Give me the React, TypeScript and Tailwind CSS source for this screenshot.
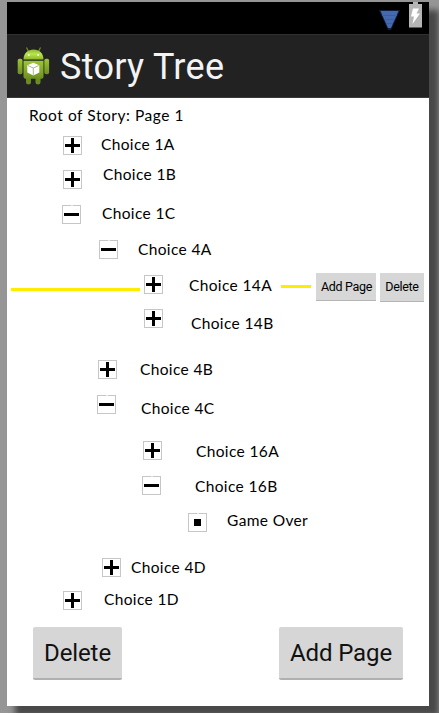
type Kind = "plus" | "minus" | "dot";

const face = "font-['Lato','Liberation_Sans',sans-serif] text-[15.5px] leading-5 whitespace-nowrap text-black";
const plain = `${face} tracking-[0.36px]`;

function Toggle({ kind, className = "" }: { kind: Kind; className?: string }) {
  return (
    <svg className={`h-[19px] w-[19px] shrink-0 ${className}`} viewBox="0 0 19 19" shapeRendering="crispEdges">
      <rect x="0.5" y="0.5" width="18" height="18" fill="#fff" stroke="#c6c6c6" />
      {kind === "dot" ? (
        <path d="M6 6h7v7H6z" />
      ) : (
        <path d="M2 8h15v3H2z" />
      )}
      {kind === "plus" && <path d="M8 2h3v15H8z" />}
      {kind !== "plus" && <path d="M9 0h2v1H9z" fill="#e8e8e8" />}
    </svg>
  );
}

const before: { kind: Kind; label: string; row: string; text: string }[] = [
  { kind: "plus", label: "Choice 1A", row: "h-[34px] pl-14", text: "ml-[19px] -mt-[2px]" },
  { kind: "plus", label: "Choice 1B", row: "h-[35px] pl-14", text: "ml-[21px] -mt-[6px]" },
  { kind: "minus", label: "Choice 1C", row: "h-[35px] pl-[55px]", text: "ml-[21px] -mt-[2px]" },
  { kind: "minus", label: "Choice 4A", row: "h-[35px] pl-[92px]", text: "ml-5 -mt-px" },
];

const after: typeof before = [
  { kind: "plus", label: "Choice 14B", row: "h-[51px] pl-[137px]", text: "ml-7 mt-1" },
  { kind: "plus", label: "Choice 4B", row: "h-[35px] pl-[91px]", text: "ml-[23px] -mt-px" },
  { kind: "minus", label: "Choice 4C", row: "h-[46px] pl-[90px]", text: "ml-[25px] mt-[3px]" },
  { kind: "plus", label: "Choice 16A", row: "h-[35px] pl-[136px]", text: "ml-[34px]" },
  { kind: "minus", label: "Choice 16B", row: "h-[37px] pl-[135px]", text: "ml-[34px]" },
  { kind: "dot", label: "Game Over", row: "h-[45px] pl-[181px]", text: "ml-5 -mt-[3px]" },
  { kind: "plus", label: "Choice 4D", row: "h-[33px] pl-[95px]", text: "ml-[10px] -mt-px" },
  { kind: "plus", label: "Choice 1D", row: "h-[37px] pl-14", text: "ml-[22px] -mt-[2px]" },
];

function Row({ kind, label, row, text }: (typeof before)[number]) {
  return (
    <div className={`flex items-start ${row}`}>
      <Toggle kind={kind} />
      <span className={`${plain} ${text}`}>{label}</span>
    </div>
  );
}

function Robot() {
  return (
    <svg className="mt-[11px] h-[40px] w-[34px] shrink-0" viewBox="0 0 34 40">
      <defs>
        <linearGradient id="head" x1="0" y1="0" x2="0" y2="1">
          <stop offset="0" stopColor="#8fb636" />
          <stop offset=".45" stopColor="#b9e64a" />
          <stop offset="1" stopColor="#8db62c" />
        </linearGradient>
        <linearGradient id="body" x1="0" y1="0" x2="0" y2="1">
          <stop offset="0" stopColor="#9dc636" />
          <stop offset="1" stopColor="#6d9020" />
        </linearGradient>
      </defs>
      <path d="M10.500 1.500l2 4M24.500 1.500l-2 4" stroke="#718f27" strokeWidth="1.200" />
      <path d="M7.500 13.500C7.500 7 12 3.500 17.500 3.500s10 3.500 10 10z" fill="url(#head)" />
      <circle cx="12.800" cy="9" r="1" fill="#f5ffe0" />
      <circle cx="22.200" cy="9" r="1" fill="#f5ffe0" />
      <rect x="1.700" y="12.700" width="4.800" height="15.500" rx="1.800" fill="url(#body)" />
      <rect x="28.300" y="12.700" width="4.800" height="15.500" rx="1.800" fill="url(#body)" />
      <path d="M10 31h5v5.500q0 2-2.500 2t-2.500-2zM19.500 31h5v5.500q0 2-2.500 2t-2.500-2z" fill="#6b8b20" />
      <path d="M7.500 14.700h20v16q0 2-2 2h-16q-2 0-2-2z" fill="url(#body)" />
      <path d="M17.300 16.700l6 2.500v7.300l-6 3-6-3v-7.300z" fill="#fff" />
      <path d="M11.800 19.500l5.500 2.500 5.500-2.500M17.300 22v7" fill="none" stroke="#a3b184" strokeWidth=".9" />
    </svg>
  );
}

export default function App() {
  return (
    <div className="h-[713px] w-[439px] overflow-hidden bg-[#969696] pt-[2px] pl-[7px]">
      <div className="flex h-[704px] w-[422px] flex-col bg-white shadow-[9px_9px_6px_1px_rgba(0,0,0,0.52)]">
        <div className="flex h-8 shrink-0 items-start justify-end bg-black">
          <svg className="h-8 w-[56px]" viewBox="373 2 56 32">
            <path d="M379 10h21l-9 20h-3z" fill="#1d3d78" opacity=".5" />
            <path d="M380.500 11h18l-7.500 17h-3z" fill="#4469b0" />
            <path d="M382 15.500h15M384 19.500h11M386 23.500h7" stroke="#3a5da0" />
            <path d="M413 2h5v2h4v23.500h-13V4h4z" fill="#b5b5b5" />
            <path d="M413 8.500h6l-2.500 5h3.500l-7.500 10.500 1.500-7.500h-3z" fill="#fff" />
          </svg>
        </div>
        <header className="flex h-16 shrink-0 items-start border-t border-b border-t-[#303030] border-b-[#3a3a3a] bg-[#222] pl-[9px]">
          <Robot />
          <h1 className="mt-[10px] ml-[10px] font-['Roboto',sans-serif] text-[36px] leading-[44px] tracking-[0.3px] whitespace-nowrap text-[#f3f3f3]">Story Tree</h1>
        </header>
        <main className="flex flex-1 flex-col">
          <div className={`h-[38px] pt-[7px] pl-[22px] tracking-[0.55px] ${face}`}>Root of Story: Page 1</div>
          {before.map((item) => <Row key={item.label} {...item} />)}
          <div className="flex h-[34px] items-start pl-1">
            <div className="mt-[13px] h-[3px] w-[129px] shrink-0 bg-[#ffed00]" />
            <Toggle kind="plus" className="ml-1" />
            <span className={`ml-[26px] w-[92px] shrink-0 ${plain}`}>Choice 14A</span>
            <div className="mt-[10px] h-[3px] w-[30px] shrink-0 bg-[#ffed00]" />
            <button className="-mt-[2px] ml-[5px] h-7 w-[60px] shrink-0 border-b border-[#b5b5b5] bg-[#d7d7d7] pt-px pl-px font-['Roboto',sans-serif] text-[12.5px] tracking-[-0.3px] whitespace-nowrap text-black">Add Page</button>
            <button className="-mt-[2px] ml-1 h-[29px] w-11 shrink-0 border-b border-[#b5b5b5] bg-[#d7d7d7] pt-px font-['Roboto',sans-serif] text-[12.5px] tracking-[-0.3px] whitespace-nowrap text-black">Delete</button>
          </div>
          {after.map((item) => <Row key={item.label} {...item} />)}
          <div className="flex justify-between pr-[26px] pl-[26px]">
            <button className="mt-[-1px] h-[53px] w-[89px] rounded-[2px] border-b-2 border-[#b0b0b0] bg-[#d6d6d6] font-['Roboto',sans-serif] text-[24px] tracking-[-0.1px] whitespace-nowrap text-[#111]">Delete</button>
            <button className="mt-[-1px] h-[53px] w-[124px] rounded-[2px] border-b-2 border-[#b0b0b0] bg-[#d6d6d6] font-['Roboto',sans-serif] text-[24px] tracking-[-0.1px] whitespace-nowrap text-[#111]">Add Page</button>
          </div>
        </main>
      </div>
    </div>
  );
}
